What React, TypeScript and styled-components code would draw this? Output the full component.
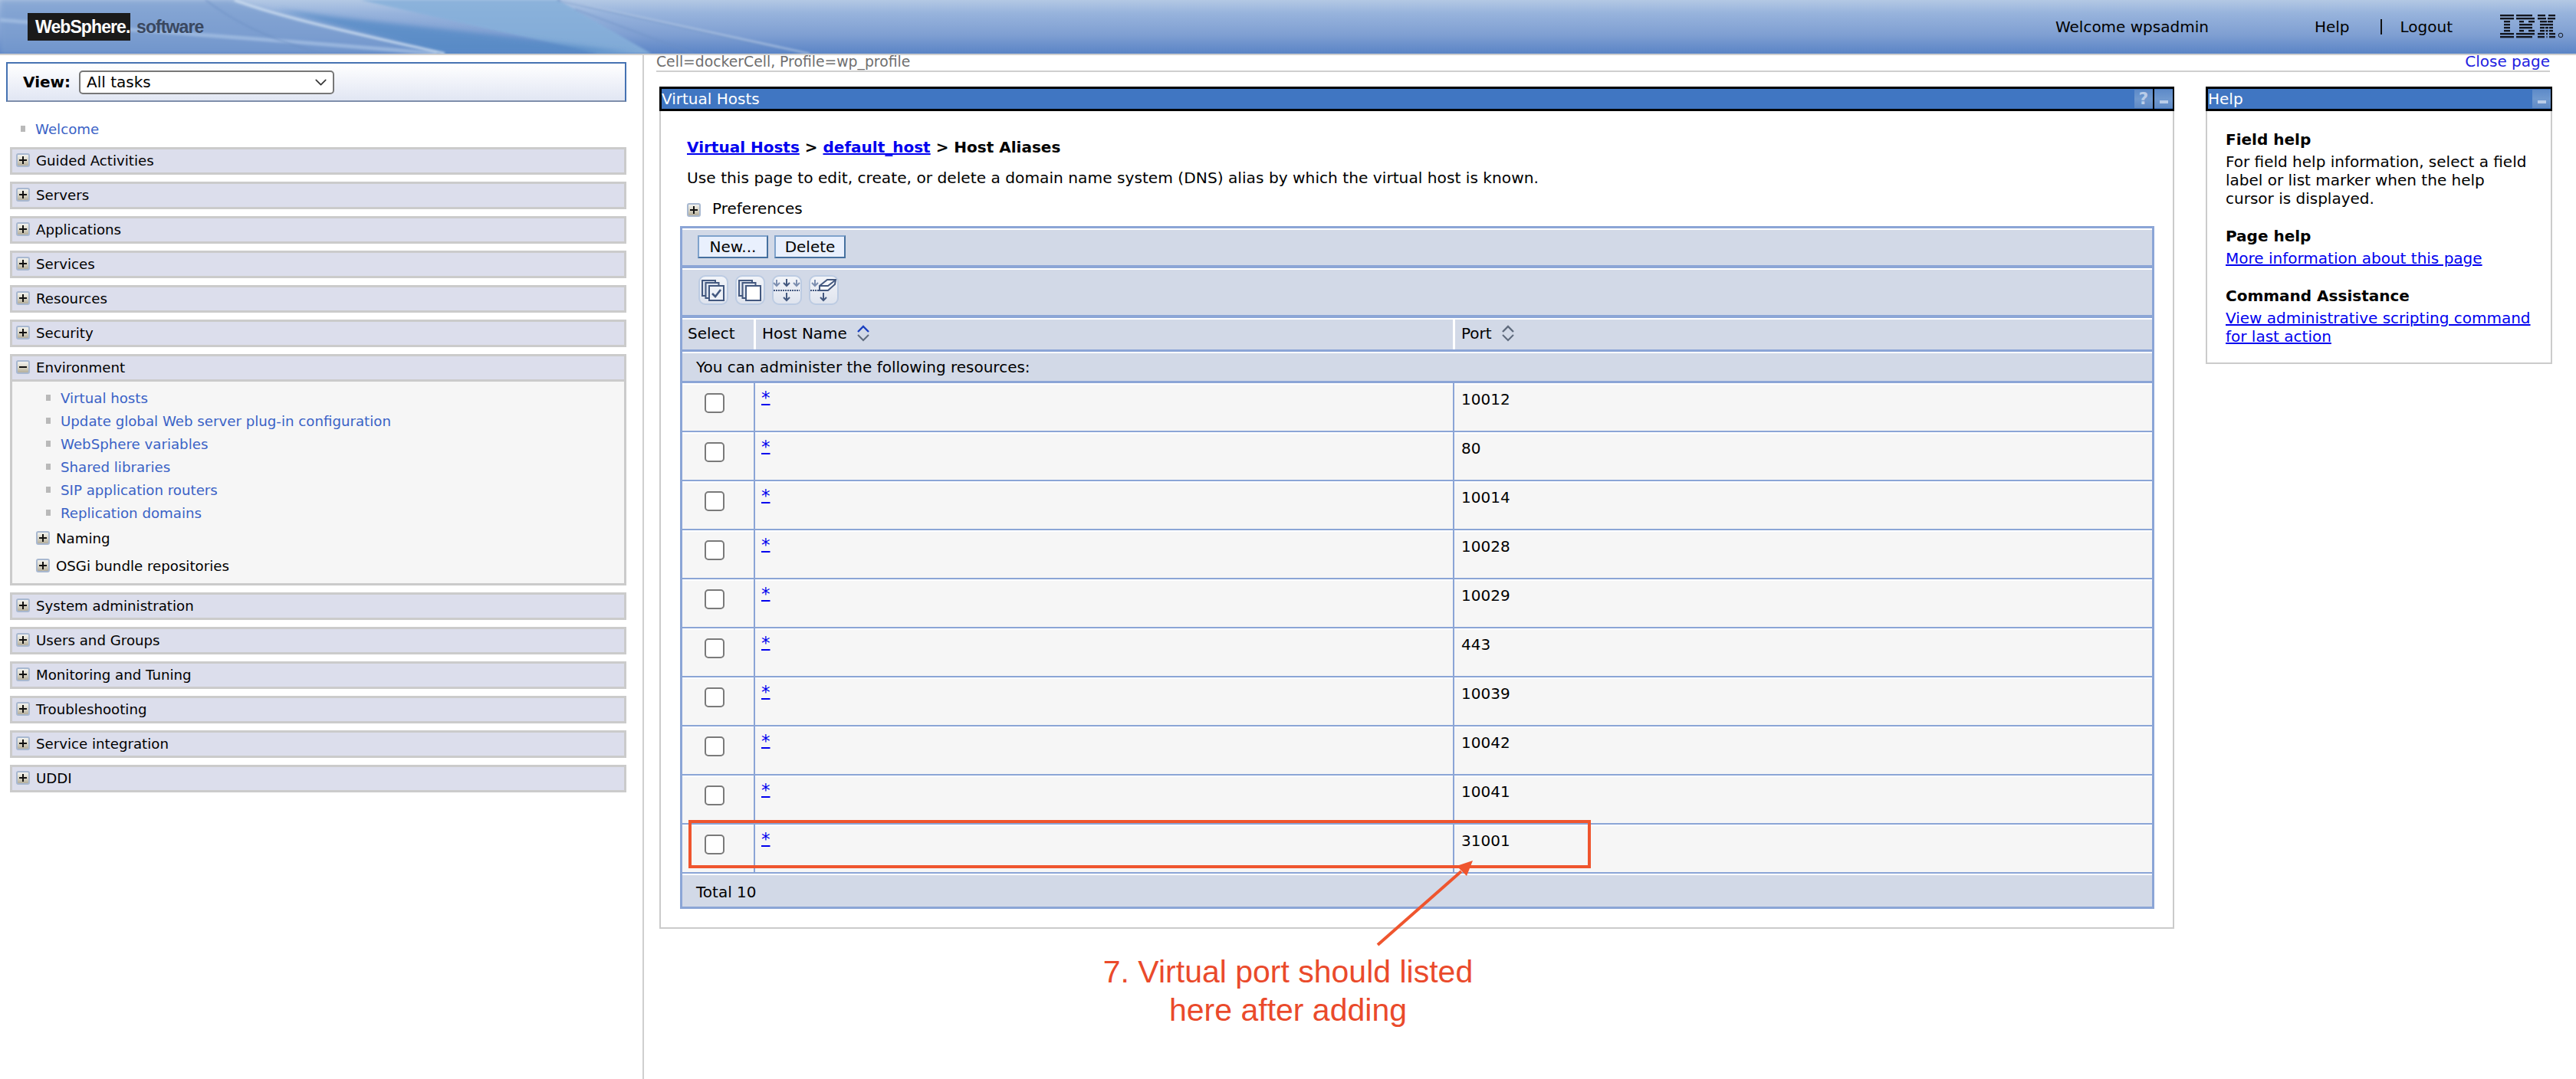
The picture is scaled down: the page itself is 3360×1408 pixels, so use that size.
import React from "react";
import styled, { createGlobalStyle } from "styled-components";
import { ChevronDown } from "lucide-react";

const Global = createGlobalStyle`
  html, body { margin: 0; padding: 0; background: #fff; }
  * { box-sizing: border-box; }
`;

const Page = styled.div`
  position: relative;
  width: 3360px;
  height: 1408px;
  overflow: hidden;
  display: flex;
  flex-direction: column;
  font-family: "DejaVu Sans", Verdana, sans-serif;
  font-size: 20px;
  color: #000;
  background: #fff;
`;

/* ---------- banner ---------- */
const Banner = styled.header`
  position: relative;
  flex: none;
  height: 72px;
  display: flex;
  align-items: center;
  padding: 0 15px 0 36px;
  border-bottom: 2px solid #cfcfcf;
  background: linear-gradient(180deg, #b3c8e4 0%, #97b3dc 25%, #7f9fd2 65%, #5a84c6 100%);
`;
const BannerArt = styled.svg`
  position: absolute;
  left: 0;
  top: 0;
`;
const LogoBlock = styled.div`
  position: relative;
  display: flex;
  align-items: center;
  height: 36px;
`;
const LogoName = styled.span`
  display: flex;
  align-items: center;
  height: 36px;
  width: 134px;
  padding-left: 10px;
  background: #1a1a1a;
  color: #fff;
  font: bold 23px "Liberation Sans", Arial, sans-serif;
  letter-spacing: -0.9px;
  white-space: nowrap;
  overflow: visible;
`;
const LogoSuffix = styled.span`
  margin-left: 8px;
  color: #3a4860;
  font: bold 23px "Liberation Sans", Arial, sans-serif;
  letter-spacing: -0.9px;
`;
const BannerText = styled.span<{ $left?: number }>`
  position: relative;
  margin-left: ${(p) => p.$left ?? 0}px;
  white-space: nowrap;
`;
const Welcome = styled(BannerText)`
  margin-left: auto;
`;
const BannerSep = styled.span`
  position: relative;
  margin-left: 40px;
  width: 2px;
  height: 20px;
  background: #111;
`;
const IbmLogo = styled.svg`
  position: relative;
  margin-left: 62px;
  flex: none;
`;

/* ---------- columns ---------- */
const Columns = styled.div`
  flex: 1;
  display: flex;
  min-height: 0;
`;
const Sidebar = styled.aside`
  flex: none;
  width: 840px;
  padding: 9px 21px 0 8px;
  border-right: 2px solid #cfcfcf;
`;
const ViewBox = styled.div`
  display: flex;
  align-items: center;
  height: 52px;
  padding: 0 0 0 20px;
  border: 2px solid #4572b2;
  border-bottom-color: #7f8fab;
  background: linear-gradient(180deg, #fff 0%, #e1e6f3 100%);
`;
const ViewLabel = styled.label`
  font-weight: bold;
  margin-right: 11px;
`;
const SelectWrap = styled.span`
  position: relative;
  display: block;
  width: 333px;
  height: 31px;
  color: #333;
  svg {
    position: absolute;
    right: 5px;
    top: 3px;
  }
`;
const Select = styled.select`
  appearance: none;
  display: block;
  width: 100%;
  height: 100%;
  padding: 0 0 0 8px;
  border: 2px solid #777;
  border-radius: 5px;
  background: #fff;
  color: #000;
  font: inherit;
`;
const Bullet = styled.i`
  flex: none;
  display: block;
  width: 6px;
  height: 8px;
  background: #b9b9b9;
`;
const NavLinkRow = styled.div<{ $indent: number }>`
  display: flex;
  align-items: center;
  height: 30px;
  padding-left: ${(p) => p.$indent}px;
`;
const NavLink = styled.a`
  margin-left: 13px;
  color: #3a62c6;
  font-size: 18.2px;
  text-decoration: none;
  white-space: nowrap;
`;
const WelcomeRow = styled.div`
  margin: 20px 0 9px;
`;
const NavList = styled.div`
  margin-left: 5px;
  display: flex;
  flex-direction: column;
  font-size: 18.2px;
`;
const GroupHead = styled.div<{ $open?: boolean }>`
  display: flex;
  align-items: center;
  gap: 8px;
  height: 36px;
  padding: 0 0 2px 5px;
  margin-bottom: ${(p) => (p.$open ? 0 : 9)}px;
  border: 3px solid #cbcbcb;
  background: #dcdeec;
`;
const GroupBody = styled.div`
  height: 266px;
  margin-bottom: 9px;
  padding-top: 6px;
  border: 3px solid #cbcbcb;
  border-top: 0;
  background: #f6f6f6;
`;
const SubGroup = styled.div`
  display: flex;
  align-items: center;
  gap: 8px;
  height: 36px;
  padding-left: 31px;
`;
const Toggle = styled.span<{ $minus?: boolean }>`
  position: relative;
  flex: none;
  display: block;
  width: 18px;
  height: 18px;
  border: 2px solid #a8b8d0;
  border-radius: 3px;
  background: linear-gradient(180deg, #f2f2ee 0%, #d8d4c4 55%, #b4ae9c 100%);
  &::before {
    content: "";
    position: absolute;
    left: 2px;
    top: 6px;
    width: 10px;
    height: 2px;
    background: #111;
  }
  &::after {
    content: "";
    display: ${(p) => (p.$minus ? "none" : "block")};
    position: absolute;
    left: 6px;
    top: 2px;
    width: 2px;
    height: 10px;
    background: #111;
  }
`;

/* ---------- workspace ---------- */
const Workspace = styled.main`
  flex: 1;
  min-width: 0;
  padding: 0 31px 0 16px;
`;
const ContextBar = styled.div`
  display: flex;
  justify-content: space-between;
  height: 22px;
  margin-right: 3px;
  border-bottom: 2px solid #cfcfcf;
  line-height: 17px;
`;
const ContextText = styled.span`
  color: #6f6f6f;
  font-size: 18.8px;
`;
const CloseLink = styled.a`
  color: #2222e0;
  text-decoration: none;
`;
const Panels = styled.div`
  display: flex;
  align-items: flex-start;
  gap: 41px;
  margin: 19px 0 0 4px;
`;
const Panel = styled.section<{ $width: number }>`
  flex: none;
  width: ${(p) => p.$width}px;
`;
const TitleBar = styled.div`
  display: flex;
  align-items: center;
  justify-content: space-between;
  height: 32px;
  border: 3px solid #000;
  border-right-width: 2px;
  background: #4076c2;
  color: #fff;
`;
const TitleText = styled.span`
  line-height: 26px;
`;
const TitleButtons = styled.span`
  display: flex;
  gap: 2px;
  align-self: stretch;
  padding-top: 1px;
  background: linear-gradient(90deg, transparent 0, transparent 24px, #000 24px, #000 26px, transparent 26px);
`;
const TitleButton = styled.span`
  display: flex;
  align-items: center;
  justify-content: center;
  width: 24px;
  height: 24px;
  background: linear-gradient(180deg, #5d8ac8 0%, #7099cf 50%, #5f8ac6 100%);
  color: #b9cce8;
  font-weight: bold;
  font-size: 22px;
  line-height: 24px;
`;
const MinusGlyph = styled.i`
  display: block;
  width: 11px;
  height: 4px;
  margin-top: 8px;
  background: #b9cce8;
`;
const PanelBody = styled.div`
  border: 2px solid #cbcbcb;
  border-top: 0;
  padding: 35px 24px 24px 25px;
`;
const Crumb = styled.h1`
  margin: 0 0 16px 9px;
  font-size: 20px;
  line-height: 24px;
  font-weight: bold;
`;
const CrumbLink = styled.a`
  color: #0000ee;
  text-decoration: underline;
`;
const Intro = styled.p`
  margin: 0 0 16px 9px;
  font-size: 20.2px;
  line-height: 24px;
`;
const Prefs = styled.div`
  display: flex;
  align-items: center;
  gap: 15px;
  height: 24px;
  margin: 0 0 11px 9px;
  & > span:first-child {
    margin-top: 4px;
  }
`;

/* ---------- table ---------- */
const Table = styled.div`
  border: 3px solid #8ba5d6;
  border-bottom: 0;
`;
const Band = styled.div<{ $h: number; $rule?: number }>`
  display: flex;
  align-items: center;
  height: ${(p) => p.$h}px;
  border-top: 2px solid #fff;
  border-bottom: ${(p) => p.$rule ?? 3}px solid #8ba5d6;
  background: #d2d9e7;
`;
const ButtonBand = styled(Band)`
  gap: 8px;
  padding: 0 0 3px 20px;
`;
const IconBand = styled(Band)`
  gap: 9px;
  padding: 0 0 6px 21px;
`;
const FlatBand = styled(Band)`
  padding-left: 18px;
`;
const TotalBand = styled(Band)`
  padding: 2px 0 0 18px;
`;
const ActionButton = styled.button<{ $w: number }>`
  width: ${(p) => p.$w}px;
  height: 30px;
  padding: 0;
  border: 2px solid;
  border-color: #7fa2cb #45709f #45709f #7fa2cb;
  border-radius: 0;
  background: #e9f0fd;
  color: #000;
  font: inherit;
`;
const IconButton = styled.span`
  flex: none;
  display: block;
  width: 39px;
  height: 39px;
  border: 2px solid #bccbe2;
  border-radius: 9px;
  background: linear-gradient(180deg, #f2f4f9 0%, #dfe4ee 100%);
  svg {
    display: block;
    margin: -2px;
  }
`;
const HeadRow = styled(Band)`
  display: grid;
  grid-template-columns: 93px 912px 1fr;
  align-items: stretch;
  padding: 0;
`;
const HeadCell = styled.div<{ $first?: boolean }>`
  display: flex;
  align-items: center;
  gap: 12px;
  padding-left: ${(p) => (p.$first ? 7 : 8)}px;
  padding-bottom: 3px;
  border-left: ${(p) => (p.$first ? "0" : "3px solid #fff")};
`;
const DataRow = styled.div`
  display: grid;
  grid-template-columns: 93px 912px 1fr;
  height: 64px;
  border-top: 2px solid #fff;
  border-bottom: 2px solid #8ba5d6;
  background: #f6f6f6;
`;
const CheckCell = styled.div`
  padding: 11px 0 0 29px;
`;
const Check = styled.input`
  appearance: none;
  display: block;
  width: 26px;
  height: 26px;
  margin: 0;
  border: 2px solid #7a7a7a;
  border-radius: 5px;
  background: #fff;
`;
const HostCell = styled.div`
  margin-top: -2px;
  padding: 7px 0 0 8px;
  border-left: 2px solid #8ba5d6;
  line-height: 24px;
`;
const StarLink = styled.a`
  color: #0000ee;
  text-decoration: underline;
  text-decoration-thickness: 2px;
  text-underline-offset: 0px;
  font-size: 23px;
`;
const PortCell = styled.div`
  margin-top: -2px;
  margin-bottom: -2px;
  padding: 9px 0 0 9px;
  border-left: 2px solid #8ba5d6;
  line-height: 24px;
`;

/* ---------- help ---------- */
const HelpTitle = styled.h2`
  margin: 25px 0 5px;
  font-size: 20px;
  line-height: 24px;
  font-weight: bold;
  &:first-child {
    margin-top: 0;
  }
`;
const HelpText = styled.p`
  margin: 0;
  line-height: 24px;
  white-space: nowrap;
`;
const HelpLink = styled.a`
  color: #0000ee;
  text-decoration: underline;
`;
const HelpBody = styled.div`
  height: 330px;
  border: 2px solid #cbcbcb;
  border-top: 0;
  padding: 25px 0 0 24px;
`;

/* ---------- annotation ---------- */
const Callout = styled.div`
  position: absolute;
  left: 898px;
  top: 1070px;
  width: 1177px;
  height: 63px;
  border: 4px solid #ef552e;
`;
const CalloutArrow = styled.svg`
  position: absolute;
  left: 1780px;
  top: 1110px;
`;
const CalloutText = styled.div`
  position: absolute;
  left: 1380px;
  top: 1243px;
  width: 600px;
  text-align: center;
  color: #ea4a2b;
  font: 41px/50px "Liberation Sans", Arial, sans-serif;
`;

const groupsA = ["Guided Activities", "Servers", "Applications", "Services", "Resources", "Security"];
const groupsB = [
  "System administration",
  "Users and Groups",
  "Monitoring and Tuning",
  "Troubleshooting",
  "Service integration",
  "UDDI",
];
const envLinks = [
  "Virtual hosts",
  "Update global Web server plug-in configuration",
  "WebSphere variables",
  "Shared libraries",
  "SIP application routers",
  "Replication domains",
];
const ports = ["10012", "80", "10014", "10028", "10029", "443", "10039", "10042", "10041", "31001"];

/* stripes of the eight-bar logo: [row, from, to] in a 72 wide field */
const ibmBars: [number, number, number][] = [
  [0, 0, 18], [0, 21, 42], [0, 49, 59], [0, 63, 72],
  [1, 0, 18], [1, 21, 45], [1, 49, 60], [1, 62, 72],
  [2, 5, 13], [2, 25, 31], [2, 37, 45], [2, 52, 61], [2, 62, 69],
  [3, 5, 13], [3, 25, 42], [3, 52, 69],
  [4, 5, 13], [4, 25, 42], [4, 52, 58], [4, 59, 63], [4, 64, 69],
  [5, 5, 13], [5, 25, 31], [5, 37, 45], [5, 52, 58], [5, 59.5, 62.5], [5, 64, 69],
  [6, 0, 18], [6, 21, 45], [6, 49, 58], [6, 60, 62], [6, 64, 72],
  [7, 0, 18], [7, 21, 42], [7, 49, 58], [7, 60.5, 61.5], [7, 64, 72],
];

const ink = "#43587f";

function Stack({ front }: { front: string }) {
  return (
    <>
      <rect x="5" y="7" width="17" height="20" fill="#dfe5ef" stroke={ink} strokeWidth="2" />
      <rect x="9.5" y="10" width="17" height="20" fill="#dfe5ef" stroke={ink} strokeWidth="2" />
      <rect x="14" y="14" width="19" height="19" fill={front} stroke={ink} strokeWidth="2" />
    </>
  );
}
function Down({ x, y, h, c = ink }: { x: number; y: number; h: number; c?: string }) {
  return (
    <path
      d={`M${x} ${y}V${y + h}M${x - 4} ${y + h - 4}L${x} ${y + h}L${x + 4} ${y + h - 4}`}
      fill="none"
      stroke={c}
      strokeWidth="2"
    />
  );
}
const Svg39: React.FC<{ children: React.ReactNode }> = ({ children }) => (
  <svg width="39" height="39" viewBox="0 0 39 39">{children}</svg>
);
function SortIcon({ active }: { active?: boolean }) {
  return (
    <svg width="18" height="24" viewBox="0 0 18 24">
      <path d="M2 10L9 3L16 10" fill="none" stroke={active ? "#1a3fc0" : "#5f6b7d"} strokeWidth="2.4" />
      <path d="M2 14L9 21L16 14" fill="none" stroke="#5f6b7d" strokeWidth="2" />
    </svg>
  );
}

export default function App() {
  return (
    <Page>
      <Global />
      <Banner>
        <BannerArt width="1100" height="70" viewBox="0 0 1100 70">
          <defs>
            <filter id="soft"><feGaussianBlur stdDeviation="1.4" /></filter>
            <filter id="softer"><feGaussianBlur stdDeviation="3" /></filter>
          </defs>
          <path d="M0 0H300L570 70H0Z" fill="#7a9dcf" opacity="0.7" filter="url(#softer)" />
          <path d="M470 0H728L850 70H780Z" fill="#86b0da" opacity="0.85" filter="url(#soft)" />
          <path d="M360 12C470 28 620 40 830 70H575Z" fill="#568bc6" opacity="0.8" filter="url(#softer)" />
          <path d="M0 26C120 36 320 48 570 70" fill="none" stroke="#a8c2e5" strokeWidth="5" opacity="0.7" filter="url(#soft)" />
          <path d="M306 0C370 24 470 45 580 70" fill="none" stroke="#cfdff1" strokeWidth="3.5" opacity="0.8" filter="url(#soft)" />
          <path d="M268 0C300 24 340 48 420 70" fill="none" stroke="#6d90c4" strokeWidth="2" opacity="0.6" filter="url(#soft)" />
          <path d="M727 0L1052 70" fill="none" stroke="#5f85bd" strokeWidth="2" opacity="0.75" filter="url(#soft)" />
          <path d="M731 0L1056 70" fill="none" stroke="#c7d8ee" strokeWidth="2" opacity="0.75" filter="url(#soft)" />
          <path d="M750 12L905 70" fill="none" stroke="#6d90c4" strokeWidth="2" opacity="0.5" filter="url(#soft)" />
        </BannerArt>
        <LogoBlock>
          <LogoName>WebSphere.</LogoName>
          <LogoSuffix>software</LogoSuffix>
        </LogoBlock>
        <Welcome>Welcome wpsadmin</Welcome>
        <BannerText $left={138}>Help</BannerText>
        <BannerSep />
        <BannerText $left={24}>Logout</BannerText>
        <IbmLogo width="84" height="34" viewBox="0 0 84 34">
          {ibmBars.map(([row, from, to]) => (
            <rect key={`${row}-${from}`} x={from} y={1 + row * 4} width={to - from} height="2.4" fill="#14171f" />
          ))}
          <circle cx="79" cy="28" r="2.8" fill="none" stroke="#14171f" strokeWidth="1" />
        </IbmLogo>
      </Banner>

      <Columns>
        <Sidebar>
          <ViewBox>
            <ViewLabel>View:</ViewLabel>
            <SelectWrap>
              <Select defaultValue="all">
                <option value="all">All tasks</option>
              </Select>
              <ChevronDown size={25} strokeWidth={1.6} />
            </SelectWrap>
          </ViewBox>
          <WelcomeRow>
            <NavLinkRow $indent={19}>
              <Bullet />
              <NavLink>Welcome</NavLink>
            </NavLinkRow>
          </WelcomeRow>
          <NavList>
            {groupsA.map((g) => (
              <GroupHead key={g}>
                <Toggle />
                {g}
              </GroupHead>
            ))}
            <GroupHead $open>
              <Toggle $minus />
              Environment
            </GroupHead>
            <GroupBody>
              {envLinks.map((l) => (
                <NavLinkRow key={l} $indent={44}>
                  <Bullet />
                  <NavLink>{l}</NavLink>
                </NavLinkRow>
              ))}
              <SubGroup>
                <Toggle />
                Naming
              </SubGroup>
              <SubGroup>
                <Toggle />
                OSGi bundle repositories
              </SubGroup>
            </GroupBody>
            {groupsB.map((g) => (
              <GroupHead key={g}>
                <Toggle />
                {g}
              </GroupHead>
            ))}
          </NavList>
        </Sidebar>

        <Workspace>
          <ContextBar>
            <ContextText>Cell=dockerCell, Profile=wp_profile</ContextText>
            <CloseLink>Close page</CloseLink>
          </ContextBar>
          <Panels>
            <Panel $width={1976}>
              <TitleBar>
                <TitleText>Virtual Hosts</TitleText>
                <TitleButtons>
                  <TitleButton>?</TitleButton>
                  <TitleButton><MinusGlyph /></TitleButton>
                </TitleButtons>
              </TitleBar>
              <PanelBody>
                <Crumb>
                  <CrumbLink>Virtual Hosts</CrumbLink> &gt; <CrumbLink>default_host</CrumbLink> &gt; Host Aliases
                </Crumb>
                <Intro>Use this page to edit, create, or delete a domain name system (DNS) alias by which the virtual host is known.</Intro>
                <Prefs>
                  <Toggle />
                  <span>Preferences</span>
                </Prefs>
                <Table>
                  <ButtonBand $h={52} $rule={4}>
                    <ActionButton $w={92}>New...</ActionButton>
                    <ActionButton $w={93}>Delete</ActionButton>
                  </ButtonBand>
                  <IconBand $h={65} $rule={4}>
                    <IconButton>
                      <Svg39>
                        <Stack front="#eef1f7" />
                        <path d="M18 24L22 28L29 19" fill="none" stroke={ink} strokeWidth="2.6" />
                      </Svg39>
                    </IconButton>
                    <IconButton>
                      <Svg39>
                        <Stack front="#ffffff" />
                      </Svg39>
                    </IconButton>
                    <IconButton>
                      <Svg39>
                        <Down x={6} y={6} h={8} c="#7d8fb0" />
                        <Down x={19} y={5} h={9} />
                        <Down x={32} y={6} h={8} c="#7d8fb0" />
                        <path d="M2 20H36" stroke={ink} strokeWidth="2" strokeDasharray="2 1" />
                        <Down x={19} y={23} h={10} />
                      </Svg39>
                    </IconButton>
                    <IconButton>
                      <Svg39>
                        <Down x={8} y={6} h={8} c="#7d8fb0" />
                        <path d="M2 20H16" stroke={ink} strokeWidth="2" strokeDasharray="2 1" />
                        <path d="M14 14L24 6H35L34 12L25 20H14Z" fill="#f4f6fa" stroke={ink} strokeWidth="2" />
                        <path d="M14 14H25L34 7" fill="none" stroke={ink} strokeWidth="2" />
                        <Down x={19} y={23} h={10} />
                      </Svg39>
                    </IconButton>
                  </IconBand>
                  <HeadRow $h={44}>
                    <HeadCell $first>Select</HeadCell>
                    <HeadCell>Host Name <SortIcon active /></HeadCell>
                    <HeadCell>Port <SortIcon /></HeadCell>
                  </HeadRow>
                  <FlatBand $h={41}>You can administer the following resources:</FlatBand>
                  {ports.map((p) => (
                    <DataRow key={p}>
                      <CheckCell><Check type="checkbox" aria-label="Select" /></CheckCell>
                      <HostCell><StarLink>*</StarLink></HostCell>
                      <PortCell>{p}</PortCell>
                    </DataRow>
                  ))}
                  <TotalBand $h={46}>Total 10</TotalBand>
                </Table>
              </PanelBody>
            </Panel>
            <Panel $width={452}>
              <TitleBar>
                <TitleText>Help</TitleText>
                <TitleButtons>
                  <TitleButton><MinusGlyph /></TitleButton>
                </TitleButtons>
              </TitleBar>
              <HelpBody>
                <HelpTitle>Field help</HelpTitle>
                <HelpText>
                  For field help information, select a field
                  <br />
                  label or list marker when the help
                  <br />
                  cursor is displayed.
                </HelpText>
                <HelpTitle>Page help</HelpTitle>
                <HelpText><HelpLink>More information about this page</HelpLink></HelpText>
                <HelpTitle>Command Assistance</HelpTitle>
                <HelpText>
                  <HelpLink>
                    View administrative scripting command
                    <br />
                    for last action
                  </HelpLink>
                </HelpText>
              </HelpBody>
            </Panel>
          </Panels>
        </Workspace>
      </Columns>

      <Callout />
      <CalloutArrow width="160" height="130" viewBox="0 0 160 130">
        <path d="M17 123L126 27" stroke="#ef552e" strokeWidth="4" fill="none" />
        <path d="M141 13L120 20L127 27L133 33Z" fill="#ef552e" />
      </CalloutArrow>
      <CalloutText>
        7. Virtual port should listed
        <br />
        here after adding
      </CalloutText>
    </Page>
  );
}
